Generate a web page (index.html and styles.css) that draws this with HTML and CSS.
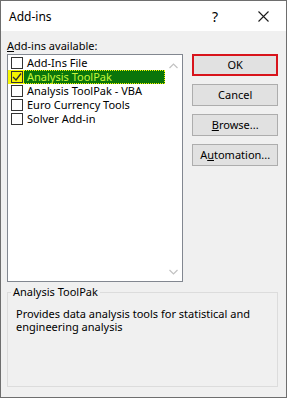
FILE: index.html
```html
<!DOCTYPE html>
<html lang="en">
<head>
  <meta charset="UTF-8">
  <title>Add-ins</title>
  <link rel="stylesheet" href="styles.css">
</head>
<body>

	<div class="window">

		<div class="titlebar">
			<span class="title">Add-ins</span>
			<span class="help">?</span>
			<svg class="close" width="11" height="11" viewBox="0 0 11 11">
				<path d="M0.5 0.5 L10.5 10.5 M10.5 0.5 L0.5 10.5" stroke="#1a1a1a" stroke-width="1.1" fill="none"/>
			</svg>
		</div>

		<div class="content">

			<div class="main">
				<div class="left">
					<div class="label"><u>A</u>dd-ins available:</div>
					<div class="listbox">
						<ul class="items">
							<li class="item">
								<span class="check-cell"><span class="box"></span></span>
								<span class="text">Add-Ins File</span>
							</li>
							<li class="item selected">
								<span class="check-cell">
									<span class="box">
										<svg width="10" height="10" viewBox="0 0 10 10"><path d="M1 5 L4 8 L9 1.5" stroke="#2b2b2b" stroke-width="1.3" fill="none"/></svg>
									</span>
								</span>
								<span class="text">Analysis ToolPak</span>
							</li>
							<li class="item">
								<span class="check-cell"><span class="box"></span></span>
								<span class="text">Analysis ToolPak - VBA</span>
							</li>
							<li class="item">
								<span class="check-cell"><span class="box"></span></span>
								<span class="text">Euro Currency Tools</span>
							</li>
							<li class="item">
								<span class="check-cell"><span class="box"></span></span>
								<span class="text">Solver Add-in</span>
							</li>
						</ul>
						<div class="scrollbar">
							<svg width="9" height="6" viewBox="0 0 9 6"><path d="M0.5 5 L4.5 1 L8.5 5" stroke="#c2c2c2" stroke-width="1.2" fill="none"/></svg>
							<svg width="9" height="6" viewBox="0 0 9 6"><path d="M0.5 1 L4.5 5 L8.5 1" stroke="#c2c2c2" stroke-width="1.2" fill="none"/></svg>
						</div>
					</div>
				</div>

				<div class="buttons">
					<div class="btn default">OK</div>
					<div class="btn">Cancel</div>
					<div class="btn"><u>B</u>rowse...</div>
					<div class="btn">A<u>u</u>tomation...</div>
				</div>
			</div>

			<fieldset class="group">
				<legend>Analysis ToolPak</legend>
				<p class="desc">Provides data analysis tools for statistical and engineering analysis</p>
			</fieldset>

		</div>

	</div>

</body>
</html>
```

FILE: styles.css
```css
	body {
		padding: 0;
		margin: 0;
		font-family: "Noto Sans", sans-serif;
		font-size: 11px;
		color: #000;
	}

	.window {
		width: 287px;
		height: 398px;
		box-sizing: border-box;
		border: 1px solid #6e6e6e;
		display: flex;
		flex-direction: column;
		background: #f0f0f0;
	}

	.titlebar {
		height: 30px;
		background: #fff;
		display: flex;
		align-items: center;
		padding-left: 8px;
	}

	.title {
		font-size: 12px;
		flex: 1;
	}

	.help {
		font-size: 14px;
		width: 10px;
		margin-right: 36px;
	}

	.close {
		margin-right: 17px;
	}

	.content {
		flex: 1;
		padding: 0 8px 0 6px;
	}

	.main {
		display: flex;
		gap: 9px;
	}

	.left {
		width: 177px;
	}

	.label {
		margin-top: 7px;
		line-height: 16px;
	}

	.listbox {
		height: 228px;
		box-sizing: border-box;
		border: 1px solid #828790;
		background: #fff;
		display: flex;
	}

	.items {
		flex: 1;
		list-style-type: none;
		padding: 1px 0 0 0;
		margin: 0;
	}

	.item {
		display: flex;
		height: 14px;
		line-height: 14px;
	}

	.check-cell {
		width: 16px;
		display: flex;
		align-items: center;
		padding-left: 3px;
		box-sizing: border-box;
	}

	.box {
		width: 12px;
		height: 12px;
		box-sizing: border-box;
		border: 1px solid #333;
		background: #fff;
		display: flex;
		align-items: center;
		justify-content: center;
	}

	.text {
		flex: 1;
		padding-left: 3px;
		white-space: nowrap;
	}

	.item.selected {
		outline: 1px dotted #f6f600;
		outline-offset: -1px;
	}

	.item.selected .check-cell {
		background: #f8f800;
	}

	.item.selected .box {
		background: #f4f400;
	}

	.item.selected .text {
		background: #0a750a;
		color: #c6f53c;
	}

	.scrollbar {
		width: 17px;
		display: flex;
		flex-direction: column;
		justify-content: space-between;
		align-items: center;
		padding: 8px 0 6px 0;
	}

	.buttons {
		width: 86px;
		padding-top: 23px;
	}

	.btn {
		height: 22px;
		line-height: 20px;
		box-sizing: border-box;
		border: 1px solid #adadad;
		background: #e1e1e1;
		text-align: center;
		margin-bottom: 8px;
	}

	.btn.default {
		border: 2px solid #d8141c;
		line-height: 18px;
	}

	.group {
		margin: 2px 0 0 0;
		padding: 0 8px;
		height: 103px;
		box-sizing: border-box;
		border: 1px solid #dcdcdc;
	}

	.group legend {
		padding: 0 2px;
		margin-left: -5px;
		line-height: 16px;
	}

	.desc {
		margin: 7px 0 0 0;
		line-height: 13px;
	}
```
